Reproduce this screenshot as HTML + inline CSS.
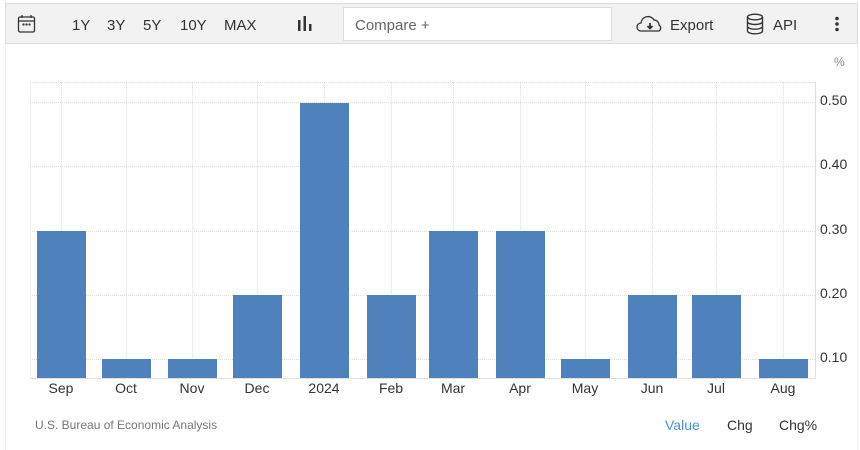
<!DOCTYPE html>
<html><head><meta charset="utf-8"><style>
*{margin:0;padding:0;box-sizing:border-box}
body{width:860px;height:450px;background:#fff;font-family:"Liberation Sans",sans-serif;position:relative;overflow:hidden}
.a{position:absolute}
.bar{position:absolute;background:#4f81bd;width:49px}
.gh{position:absolute;left:30px;width:785px;border-top:1px dotted #ddd;height:0}
.gv{position:absolute;top:82px;height:296px;border-left:1px dotted #ddd;width:0}
.xl{position:absolute;top:380px;font-size:14px;color:#333;width:60px;text-align:center}
.yl{position:absolute;left:820px;font-size:14px;color:#333}
.tb{font-size:15px;color:#333;position:absolute;top:17px}
</style></head><body>
<div class="a" style="left:5px;top:0;width:853px;height:450px;border-left:1px solid #eee;border-right:1px solid #eee"></div>
<div class="a" style="left:5px;top:3px;width:853px;height:41px;background:#f2f2f2;border:1px solid #ddd"></div>
<svg class="a" style="left:17px;top:14px" width="20" height="20" viewBox="0 0 20 20" fill="none" stroke="#333" stroke-width="1.3"><rect x="1.5" y="3" width="16" height="15" rx="1.5"/><line x1="1.5" y1="7" x2="17.5" y2="7"/><line x1="5" y1="1" x2="5" y2="4"/><line x1="14" y1="1" x2="14" y2="4"/><circle cx="6.5" cy="10.5" r=".5" fill="#333"/><circle cx="9.5" cy="10.5" r=".5" fill="#333"/><circle cx="12.5" cy="10.5" r=".5" fill="#333"/></svg>
<span class="tb" style="left:72px">1Y</span><span class="tb" style="left:107px">3Y</span><span class="tb" style="left:143px">5Y</span><span class="tb" style="left:180px">10Y</span><span class="tb" style="left:224px">MAX</span>
<svg class="a" style="left:297px;top:15px" width="16" height="17"><rect x="1" y="5" width="2.5" height="11" fill="#333"/><rect x="6.5" y="1" width="2.5" height="15" fill="#333"/><rect x="12" y="9" width="2.5" height="7" fill="#333"/></svg>
<div class="a" style="left:343px;top:7px;width:269px;height:34px;background:#fff;border:1px solid #ddd;font-size:15px;color:#666;padding:9px 11px">Compare +</div>
<svg class="a" style="left:636px;top:14px" width="28" height="20" viewBox="0 0 28 20" fill="none" stroke="#333" stroke-width="1.3"><path d="M7 17H5a4 4 0 0 1 0-8 7 7 0 0 1 13-3 5 5 0 0 1 5 5 3.5 3.5 0 0 1 0 6H7z"/><path d="M14 9v5M11.5 12l2.5 2.5 2.5-2.5" stroke-width="1.8"/></svg>
<span class="tb" style="left:670px">Export</span>
<svg class="a" style="left:746px;top:13px" width="18" height="22" viewBox="0 0 18 22" fill="none" stroke="#333" stroke-width="1.4"><ellipse cx="9" cy="4" rx="7.5" ry="2.8"/><path d="M1.5 4v14c0 1.6 3.4 2.8 7.5 2.8s7.5-1.2 7.5-2.8V4M1.5 8.7c0 1.6 3.4 2.8 7.5 2.8s7.5-1.2 7.5-2.8M1.5 13.4c0 1.6 3.4 2.8 7.5 2.8s7.5-1.2 7.5-2.8"/></svg>
<span class="tb" style="left:773px">API</span>
<svg class="a" style="left:834px;top:16px" width="6" height="16"><circle cx="3" cy="2.5" r="1.8" fill="#333"/><circle cx="3" cy="8" r="1.8" fill="#333"/><circle cx="3" cy="13.5" r="1.8" fill="#333"/></svg>

<div class="a" style="left:834px;top:55px;font-size:12px;color:#888">%</div>
<div class="gh" style="top:82px"></div><div class="gh" style="top:102px"></div><div class="gh" style="top:166px"></div><div class="gh" style="top:231px"></div><div class="gh" style="top:295px"></div><div class="gh" style="top:359px"></div>
<div class="gv" style="left:30px"></div><div class="gv" style="left:61px"></div><div class="gv" style="left:126px"></div><div class="gv" style="left:192px"></div><div class="gv" style="left:257px"></div><div class="gv" style="left:324px"></div><div class="gv" style="left:391px"></div><div class="gv" style="left:453px"></div><div class="gv" style="left:520px"></div><div class="gv" style="left:585px"></div><div class="gv" style="left:652px"></div><div class="gv" style="left:716px"></div><div class="gv" style="left:783px"></div>
<div class="a" style="left:815px;top:82px;width:1px;height:296px;background:#e0e0e0"></div>
<div class="a" style="left:30px;top:378px;width:786px;height:1px;background:#e0e0e0"></div>
<div class="bar" style="left:37px;top:231px;height:147px"></div>
<div class="bar" style="left:102px;top:359px;height:19px"></div>
<div class="bar" style="left:168px;top:359px;height:19px"></div>
<div class="bar" style="left:233px;top:295px;height:83px"></div>
<div class="bar" style="left:300px;top:103px;height:275px"></div>
<div class="bar" style="left:367px;top:295px;height:83px"></div>
<div class="bar" style="left:429px;top:231px;height:147px"></div>
<div class="bar" style="left:496px;top:231px;height:147px"></div>
<div class="bar" style="left:561px;top:359px;height:19px"></div>
<div class="bar" style="left:628px;top:295px;height:83px"></div>
<div class="bar" style="left:692px;top:295px;height:83px"></div>
<div class="bar" style="left:759px;top:359px;height:19px"></div>
<div class="yl" style="top:92px">0.50</div><div class="yl" style="top:156px">0.40</div><div class="yl" style="top:221px">0.30</div><div class="yl" style="top:285px">0.20</div><div class="yl" style="top:349px">0.10</div>
<div class="xl" style="left:31px">Sep</div><div class="xl" style="left:96px">Oct</div><div class="xl" style="left:162px">Nov</div><div class="xl" style="left:227px">Dec</div><div class="xl" style="left:294px">2024</div><div class="xl" style="left:361px">Feb</div><div class="xl" style="left:423px">Mar</div><div class="xl" style="left:490px">Apr</div><div class="xl" style="left:555px">May</div><div class="xl" style="left:622px">Jun</div><div class="xl" style="left:686px">Jul</div><div class="xl" style="left:753px">Aug</div>
<div class="a" style="left:35px;top:418px;font-size:12px;color:#777">U.S. Bureau of Economic Analysis</div>
<div class="a" style="left:665px;top:417px;font-size:14px;color:#4a90d9">Value</div>
<div class="a" style="left:727px;top:417px;font-size:14px;color:#333">Chg</div>
<div class="a" style="left:779px;top:417px;font-size:14px;color:#333">Chg%</div>
</body></html>
